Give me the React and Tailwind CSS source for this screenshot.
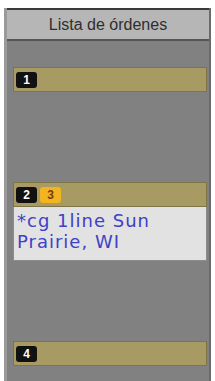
import React from "react";

function Badge({ children, yellow }) {
  return (
    <div
      className={
        "flex h-[16px] w-[21px] items-center justify-center rounded-[3px] text-[12px] font-bold leading-none " +
        (yellow ? "bg-[#f2b421] text-[#7a3a10]" : "bg-[#111] text-white")
      }
      style={{ fontFamily: '"Liberation Sans", Arial, sans-serif' }}
    >
      {children}
    </div>
  );
}

function Bar({ children }) {
  return (
    <div className="flex h-[25px] items-center gap-[3px] border border-[#7d7448] bg-[#a79a62] pl-[2px]">
      {children}
    </div>
  );
}

export default function App() {
  return (
    <div className="h-[381px] w-[215px] overflow-hidden bg-white pt-[8px] pl-[4px] pr-[4px]">
      <div className="flex h-full flex-col border-l-[3px] border-r-[2px] border-l-[#9a9a9a] border-r-[#6a6a6a] bg-[#818181]">
        <div
          className="flex h-[33px] items-center justify-center border-t-2 border-b-2 border-t-[#3a3a3a] border-b-[#555] bg-[#b6b6b6] text-[16px] text-[#2e2e2e]"
          style={{ fontFamily: '"Liberation Sans", Arial, sans-serif' }}
        >
          Lista de órdenes
        </div>
        <div className="flex flex-col pl-[6px] pr-[2px]">
          <div className="mt-[26px]">
            <Bar>
              <Badge>1</Badge>
            </Bar>
          </div>
          <div className="mt-[90px]">
            <Bar>
              <Badge>2</Badge>
              <Badge yellow>3</Badge>
            </Bar>
            <div
              className="h-[54px] border border-t-0 border-[#8c8c8c] bg-[#e2e2e2] px-[3px] pt-[3px] text-[18px] leading-[21px] tracking-[1px] text-[#4040c8]"
              style={{ fontFamily: '"DejaVu Sans", Verdana, sans-serif' }}
            >
              *cg 1line Sun
              <br />
              Prairie, WI
            </div>
          </div>
          <div className="mt-[80px]">
            <Bar>
              <Badge>4</Badge>
            </Bar>
          </div>
        </div>
      </div>
    </div>
  );
}
